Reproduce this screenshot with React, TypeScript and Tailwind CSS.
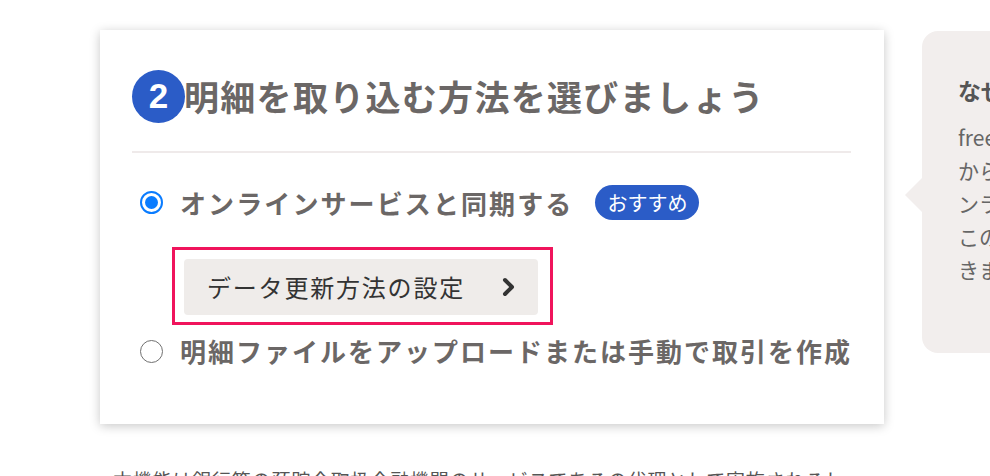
import React from "react";

const jp = { fontFamily: '"Noto Sans CJK JP", "Noto Sans", sans-serif' };

function Radio({ checked }: { checked?: boolean }) {
  return checked ? (
    <span className="flex h-[23px] w-[23px] shrink-0 items-center justify-center rounded-full border-2 border-[#0a7cff] bg-white">
      <span className="h-[13px] w-[13px] rounded-full bg-[#0a7cff]" />
    </span>
  ) : (
    <span className="h-[23px] w-[23px] shrink-0 rounded-full border-[1.5px] border-[#707070] bg-white" />
  );
}

function Chevron() {
  return (
    <svg width="18" height="22" viewBox="0 0 18 22" fill="none">
      <path d="M5 4 L12 11 L5 18" stroke="#333" strokeWidth="4" strokeLinecap="round" strokeLinejoin="round" />
    </svg>
  );
}

export default function App() {
  return (
    <div className="h-[476px] w-[990px] overflow-hidden bg-white" style={jp}>
      <div className="flex items-start pl-[100px] pt-[30px]">
        {/* step card */}
        <section className="w-[784px] shrink-0 bg-white pb-[57px] pl-[32px] pr-[33px] pt-[40px] shadow-[0_2px_10px_rgba(0,0,0,0.22)]">
          <h2 className="flex items-center">
            <span
              className="flex h-[53px] w-[53px] shrink-0 items-center justify-center rounded-full bg-[#2b5cc7] text-[35px] font-bold text-white"
              style={{ fontFamily: '"Liberation Sans", Arial, sans-serif' }}
            >
              2
            </span>
            <span className="-ml-[1px] whitespace-nowrap text-[35px] font-bold tracking-[1.3px] text-[#6b6766]">
              明細を取り込む方法を選びましょう
            </span>
          </h2>

          <div className="mt-[28px] h-[2px] bg-[#efeaea]" />

          <div className="mt-[32px] flex items-center pl-[8px]">
            <Radio checked />
            <span className="ml-[17px] whitespace-nowrap text-[26px] font-bold leading-[32px] tracking-[2.1px] text-[#6b6766]">
              オンラインサービスと同期する
            </span>
            <span className="ml-[22px] flex h-[35px] items-center rounded-full bg-[#2b5cc7] px-[12px] text-[20px] text-white">
              おすすめ
            </span>
          </div>

          <div className="relative ml-[52px] mt-[39px] w-[354px]">
            <button className="flex h-[56px] w-[354px] items-center justify-between rounded-[4px] bg-[#efecea] pl-[23px] pr-[20px] text-[24px] tracking-[1.8px] text-[#333]">
              <span>データ更新方法の設定</span>
              <Chevron />
            </button>
            {/* highlight frame */}
            <span className="pointer-events-none absolute -bottom-[10px] -left-[12px] -right-[15px] -top-[12px] border-[3px] border-[#f0145c]" />
          </div>

          <div className="mt-[20px] flex items-center pl-[8px]">
            <Radio />
            <span className="ml-[17px] whitespace-nowrap text-[26px] font-bold leading-[32px] tracking-[2px] text-[#6b6766]">
              明細ファイルをアップロードまたは手動で取引を作成
            </span>
          </div>
        </section>

        {/* help bubble */}
        <aside className="relative ml-[38px] mt-[1px] h-[322px] w-[300px] shrink-0 rounded-[16px] bg-[#f2eeed] pl-[36px] pt-[44px] text-[#666]">
          <span className="absolute -left-[17px] top-[147px] h-0 w-0 border-y-[17px] border-r-[17px] border-y-transparent border-r-[#f2eeed]" />
          <p className="whitespace-nowrap text-[23px] font-bold leading-[30px] text-[#555]">なぜ同期がおすすめ？</p>
          <div className="mt-[16px] whitespace-nowrap text-[21px] leading-[33px]">
            <p>freeeは銀行やカード会社</p>
            <p>から明細を自動で取り込み、オ</p>
            <p>ンラインで管理できます。</p>
            <p>この方法なら入力の手間を省</p>
            <p>きます。</p>
          </div>
        </aside>
      </div>

      <p className="ml-[113px] mt-[42px] whitespace-nowrap text-[19px] tracking-[0.8px] text-[#555]">
        本機能は銀行等の預貯金取扱金融機関のサービスであるの代理として実施されるし
      </p>
    </div>
  );
}
